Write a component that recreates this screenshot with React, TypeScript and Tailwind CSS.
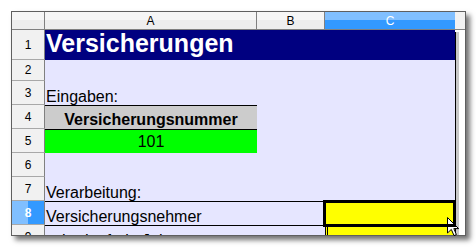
import React from "react";

const F = { fontFamily: '"Liberation Sans", Arial, sans-serif' };

function RH({ n, h, sel }: { n: number; h: string; sel?: boolean }) {
  return (
    <div
      className={`w-[33px] shrink-0 flex items-center justify-center border-r border-b border-r-[#808080] border-b-[#a8a8a8] text-[12px] ${h} ${
        sel
          ? "bg-[linear-gradient(to_right,#80bfff_50%,#3399ff_50%)] text-white font-bold"
          : "bg-[#f1f1f1] text-black"
      }`}
    >
      {n}
    </div>
  );
}

export default function App() {
  return (
    <div className="relative w-[476px] h-[247px] bg-white overflow-hidden" style={F}>
      <div className="pl-[11px] pt-[11px]">
        <div className="w-[455px] h-[225px] border border-[#5f5f5f] overflow-hidden flex flex-col bg-white shadow-[4px_4px_5px_rgba(0,0,0,0.55)]">
          {/* column header */}
          <div className="flex h-[18px] shrink-0 border-b border-[#808080] text-[12px]">
            <div className="w-[33px] border-r border-[#808080] bg-[linear-gradient(to_bottom,#f6f6f6_50%,#eeeeee_50%)]" />
            <div className="w-[212px] border-r border-[#808080] flex items-center justify-center bg-[linear-gradient(to_bottom,#f6f6f6_50%,#eeeeee_50%)]">A</div>
            <div className="w-[68px] border-r border-[#808080] flex items-center justify-center bg-[linear-gradient(to_bottom,#f6f6f6_50%,#eeeeee_50%)]">B</div>
            <div className="w-[130px] flex items-center justify-center text-white bg-[linear-gradient(to_bottom,#80bfff_50%,#3399ff_50%)]">C</div>
            <div className="w-[10px] bg-[#f1f1f1]" />
          </div>
          {/* body */}
          <div className="flex flex-1 min-h-0">
            <div className="flex flex-col w-[443px] text-[16px] leading-[16px] text-black">
              {/* row 1 */}
              <div className="flex h-[30px] shrink-0">
                <RH n={1} h="h-[30px]" />
                <div className="flex-1 bg-[#000080] text-white font-bold text-[25px] leading-[25px] pl-[1px] pt-[1px]">
                  Versicherungen
                </div>
              </div>
              {/* row 2 */}
              <div className="flex h-[21px] shrink-0">
                <RH n={2} h="h-[21px]" />
                <div className="flex-1 bg-[#e6e6ff]" />
              </div>
              {/* row 3 */}
              <div className="flex h-[24px] shrink-0">
                <RH n={3} h="h-[24px]" />
                <div className="flex-1 bg-[#e6e6ff] flex items-end pl-[1px]">Eingaben:</div>
              </div>
              {/* row 4 */}
              <div className="flex h-[24px] shrink-0">
                <RH n={4} h="h-[24px]" />
                <div className="w-[212px] bg-[#cccccc] border-t border-black flex items-end justify-center font-bold pb-[1px]">
                  Versicherungsnummer
                </div>
                <div className="flex-1 bg-[#e6e6ff]" />
              </div>
              {/* row 5 */}
              <div className="flex h-[24px] shrink-0">
                <RH n={5} h="h-[24px]" />
                <div className="w-[212px] bg-[#00ff00] border-t border-black flex items-end justify-center pb-[3px]">
                  101
                </div>
                <div className="flex-1 bg-[#e6e6ff]" />
              </div>
              {/* row 6 */}
              <div className="flex h-[24px] shrink-0">
                <RH n={6} h="h-[24px]" />
                <div className="flex-1 bg-[#e6e6ff]" />
              </div>
              {/* row 7 */}
              <div className="flex h-[24px] shrink-0">
                <RH n={7} h="h-[24px]" />
                <div className="flex-1 bg-[#e6e6ff] flex items-end pl-[1px]">Verarbeitung:</div>
              </div>
              {/* row 8 */}
              <div className="flex h-[24px] shrink-0">
                <RH n={8} h="h-[24px]" sel />
                <div className="w-[212px] bg-[#e6e6ff] border-t border-black flex items-end pl-[1px]">
                  Versicherungsnehmer
                </div>
                <div className="w-[68px] bg-[#e6e6ff] border-t border-black" />
                <div className="relative w-[130px] bg-[#ffff00]">
                  <div className="absolute z-10 -left-[2px] -top-[1px] -right-[1px] -bottom-[2px] border-[3px] border-black" />
                </div>
              </div>
              {/* row 9 */}
              <div className="flex h-[24px] shrink-0">
                <RH n={9} h="h-[24px]" />
                <div className="w-[212px] bg-[#e6e6ff] border-t border-black flex items-end pl-[1px]">
                  schadenfreie Jahre
                </div>
                <div className="w-[68px] bg-[#e6e6ff] border-t border-black" />
                <div className="w-[130px] bg-[#ffff00] border-l-[3px] border-double border-black" />
              </div>
            </div>
            {/* right strip */}
            <div className="w-[10px] bg-white pt-[2px]">
              <div className="h-full w-[4px] border-l border-black bg-[#c8c8c8]" />
            </div>
          </div>
        </div>
      </div>
      {/* mouse cursor */}
      <svg
        className="absolute left-[447px] top-[217px]"
        width="13"
        height="20"
        viewBox="0 0 13 20"
      >
        <path
          d="M0.5 0.5 L0.5 16 L4.3 12.4 L7 18.6 L9.4 17.6 L6.8 11.6 L11.6 11.6 Z"
          fill="white"
          stroke="black"
          strokeWidth="1"
          strokeLinejoin="round"
        />
      </svg>
    </div>
  );
}
